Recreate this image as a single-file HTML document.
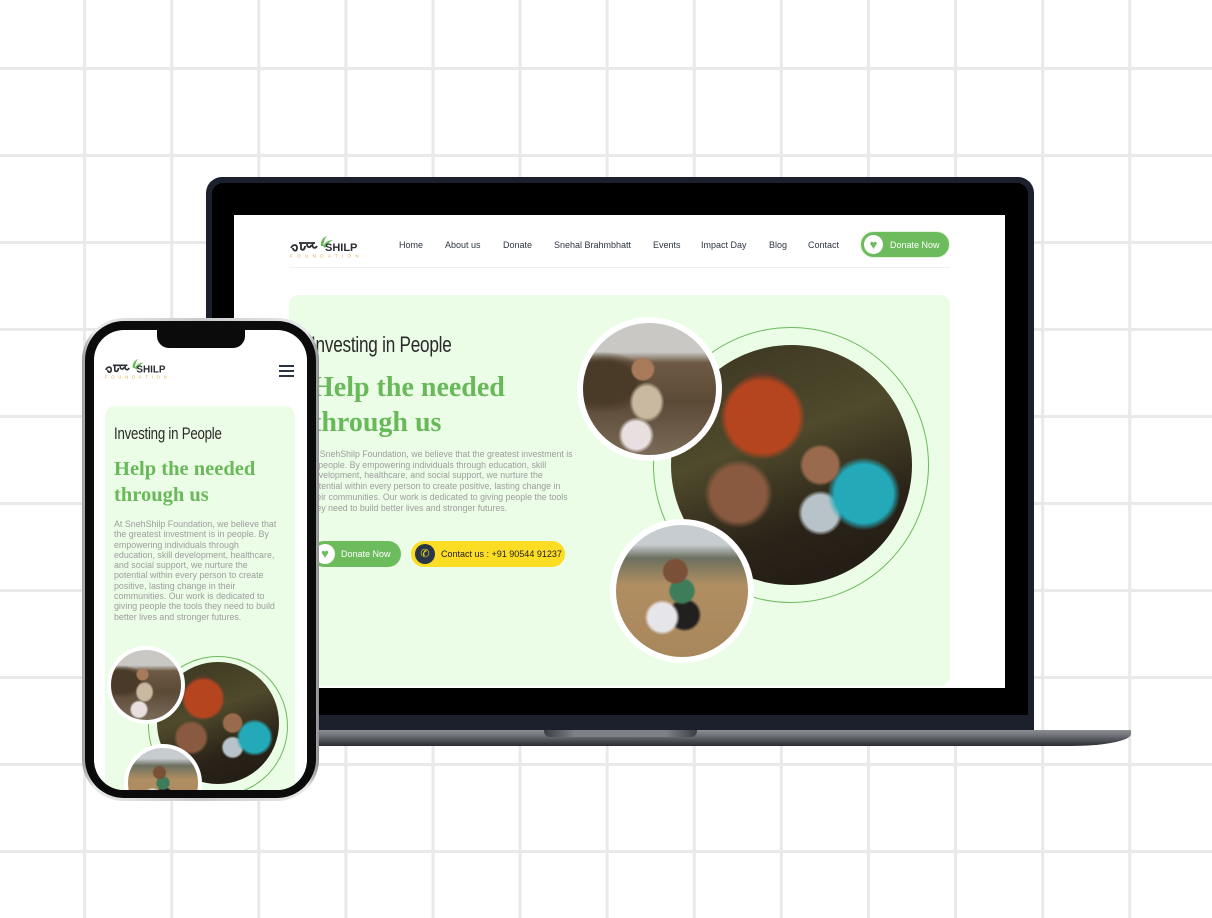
<!DOCTYPE html>
<html><head><meta charset="utf-8"><style>
*{margin:0;padding:0;box-sizing:border-box}
body{width:1212px;height:918px;overflow:hidden;position:relative;background:#fff;font-family:"Liberation Sans",sans-serif}
.grid{position:absolute;inset:0;background-image:linear-gradient(90deg,transparent 83px,#e9e9e9 83px,#e9e9e9 86px,transparent 86px),linear-gradient(180deg,transparent 67px,#e9e9e9 67px,#e9e9e9 70px,transparent 70px);background-size:87.1px 87px;background-position:0 0}
.abs{position:absolute}
.circ{position:absolute;border-radius:50%}
.cursive{font-family:"Liberation Sans Narrow","Liberation Sans",sans-serif;font-weight:normal;color:#2a2a2a;transform:scaleX(.78);transform-origin:left;letter-spacing:-.3px}
.serif{font-family:"Liberation Serif",serif;font-weight:bold;color:#69b95a}
.nav a{position:absolute;font-size:9px;color:#2d3540;text-decoration:none}
.photo1{background:radial-gradient(circle at 45% 35%,#a97a5a 0 9%,transparent 11%),radial-gradient(ellipse at 48% 60%,#c9b9a0 0 14%,transparent 18%),radial-gradient(circle at 40% 85%,#e8e0e0 0 10%,transparent 13%),radial-gradient(ellipse at 15% 45%,#4a3a28 0 20%,transparent 30%),linear-gradient(180deg,#c9c8c4 0 22%,#6e5a44 30%,#5b4a36 60%,#7a6a58 100%)}
.photo2{background:radial-gradient(circle at 38% 30%,#b5451f 0 16%,transparent 19%),radial-gradient(circle at 38% 22%,#5a3a2a 0 10%,transparent 12%),radial-gradient(circle at 62% 50%,#9a6a4c 0 9%,transparent 11%),radial-gradient(circle at 80% 62%,#23a9b8 0 12%,transparent 15%),radial-gradient(circle at 28% 62%,#8a5a40 0 12%,transparent 15%),radial-gradient(circle at 62% 70%,#b7c3c8 0 8%,transparent 10%),linear-gradient(160deg,#3a3520,#4f4a2c 40%,#2a2318 70%,#1f1a14)}
.photo3{background:radial-gradient(circle at 45% 35%,#7a5038 0 10%,transparent 12%),radial-gradient(circle at 50% 50%,#3e7d5a 0 12%,transparent 15%),radial-gradient(circle at 35% 70%,#e6e6ea 0 11%,transparent 14%),radial-gradient(circle at 52% 68%,#22201e 0 12%,transparent 15%),linear-gradient(180deg,#c7ccd0 0 15%,#6c7060 25%,#b08e62 45%,#a9875c 100%)}
</style></head><body>
<div class="grid"></div>

<!-- laptop -->
<div class="abs" style="left:206px;top:177px;width:828px;height:556px;background:#1b202c;border-radius:16px 16px 0 0"></div>
<div class="abs" style="left:212px;top:183px;width:816px;height:532px;background:#000;border-radius:11px 11px 0 0"></div>
<div class="abs" style="left:200px;top:730px;width:931px;height:16px;background:linear-gradient(180deg,#8b8e93 0,#6e7177 35%,#3d4046 80%,#2a2c30);border-radius:0 0 60px 4px/0 0 12px 4px"></div>
<div class="abs" style="left:544px;top:730px;width:153px;height:7px;background:linear-gradient(90deg,#3a3d42,#7d8086 20%,#7d8086 80%,#3a3d42);border-radius:0 0 6px 6px"></div>

<div class="abs" style="left:234px;top:215px;width:771px;height:473px;background:#fff;overflow:hidden">
  <div class="abs" style="left:55px;top:19px;width:80px;height:24px">
    <svg width="80" height="24" viewBox="0 0 80 24"><path d="M2 14c2-4 6-4 6 0s-4 3-4 0M10 9h16M12 9v6c2 2 4 0 4-3M18 10c0 4 4 4 4 1M24 9c-2 4 2 7 4 3" stroke="#2a2d33" stroke-width="1.8" fill="none"/><path d="M32 12c-1-6 3-9 6-10-3 3-3 7-4 10M34 12c3-5 7-6 10-6-4 2-6 5-8 8" fill="#69b95a"/><text x="36" y="17" font-family="Liberation Sans" font-weight="bold" font-size="11" fill="#2a2d33">SHILP</text><text x="1" y="23.5" font-family="Liberation Sans" font-size="4.6" letter-spacing="4.3" fill="#e0a84a">FOUNDATION</text></svg>
  </div>
  <div class="nav">
    <a style="left:165px;top:25px">Home</a>
    <a style="left:211px;top:25px">About us</a>
    <a style="left:269px;top:25px">Donate</a>
    <a style="left:320px;top:25px">Snehal Brahmbhatt</a>
    <a style="left:419px;top:25px">Events</a>
    <a style="left:467px;top:25px">Impact Day</a>
    <a style="left:535px;top:25px">Blog</a>
    <a style="left:574px;top:25px">Contact</a>
  </div>
  <div class="abs" style="left:626px;top:16px;width:90px;height:27px;border-radius:14px;background:#6cbb5c;border:1px solid #e6f5e0">
    <div class="circ" style="left:3px;top:3px;width:19px;height:19px;background:#fff;color:#6cbb5c;font-size:13px;line-height:19px;text-align:center">♥</div>
    <div class="abs" style="left:29px;top:8px;font-size:9px;color:#fff">Donate Now</div>
  </div>
  <div class="abs" style="left:55px;top:52px;width:661px;height:1px;background:#eef0f0"></div>
  <!-- card -->
  <div class="abs" style="left:55px;top:80px;width:661px;height:391px;background:#ebfde6;border-radius:10px">
    <div class="abs cursive" style="left:22px;top:37px;font-size:22px">Investing in People</div>
    <div class="abs serif" style="left:23px;top:75px;font-size:28px;line-height:35px">Help the needed<br>through us</div>
    <div class="abs" style="left:20px;top:154px;width:265px;font-size:8.8px;line-height:10.7px;color:#9d9d9d">At SnehShilp Foundation, we believe that the greatest investment is in people. By empowering individuals through education, skill development, healthcare, and social support, we nurture the potential within every person to create positive, lasting change in their communities. Our work is dedicated to giving people the tools they need to build better lives and stronger futures.</div>
    <div class="abs" style="left:22px;top:246px;width:90px;height:26px;border-radius:13px;background:#6cbb5c">
      <div class="circ" style="left:4px;top:3px;width:20px;height:20px;background:#fff;color:#6cbb5c;font-size:13px;line-height:20px;text-align:center">♥</div>
      <div class="abs" style="left:30px;top:8px;font-size:9px;color:#fff">Donate Now</div>
    </div>
    <div class="abs" style="left:122px;top:246px;width:154px;height:26px;border-radius:13px;background:#fddd24">
      <div class="circ" style="left:4px;top:3px;width:20px;height:20px;background:#283645;color:#fddd24;font-size:11px;line-height:20px;text-align:center">✆</div>
      <div class="abs" style="left:30px;top:8px;font-size:9px;color:#222">Contact us : +91 90544 91237</div>
    </div>
    <!-- circles -->
    <div class="circ" style="left:364px;top:32px;width:276px;height:276px;border:1px solid #6cbb5c"></div>
    <div class="circ photo2" style="left:382px;top:50px;width:241px;height:240px"></div>
    <div class="circ photo1" style="left:288px;top:22px;width:145px;height:144px;border:6px solid #fff"></div>
    <div class="circ photo3" style="left:321px;top:224px;width:144px;height:144px;border:6px solid #fff"></div>
  </div>
</div>

<!-- phone -->
<div class="abs" style="left:82px;top:318px;width:237px;height:483px;border-radius:42px;background:linear-gradient(90deg,#9a9ca0,#e8e9ea 5%,#c8c9cb 50%,#e8e9ea 95%,#8a8c90);"></div>
<div class="abs" style="left:85px;top:321px;width:231px;height:477px;border-radius:39px;background:#0b0b0b"></div>
<div class="abs" style="left:94px;top:330px;width:213px;height:460px;border-radius:30px;background:#fff;overflow:hidden">
  <div class="abs" style="left:63px;top:0;width:88px;height:18px;background:#0b0b0b;border-radius:0 0 12px 12px"></div>
  <div class="abs" style="left:10px;top:27px">
    <svg width="72" height="22" viewBox="0 0 80 24"><path d="M2 14c2-4 6-4 6 0s-4 3-4 0M10 9h16M12 9v6c2 2 4 0 4-3M18 10c0 4 4 4 4 1M24 9c-2 4 2 7 4 3" stroke="#2a2d33" stroke-width="1.8" fill="none"/><path d="M32 12c-1-6 3-9 6-10-3 3-3 7-4 10M34 12c3-5 7-6 10-6-4 2-6 5-8 8" fill="#69b95a"/><text x="36" y="17" font-family="Liberation Sans" font-weight="bold" font-size="11" fill="#2a2d33">SHILP</text><text x="1" y="23.5" font-family="Liberation Sans" font-size="4.6" letter-spacing="4.3" fill="#e0a84a">FOUNDATION</text></svg>
  </div>
  <div class="abs" style="left:185px;top:35px;width:15px;height:2px;background:#2a3440;box-shadow:0 5px 0 #2a3440,0 10px 0 #2a3440"></div>
  <div class="abs" style="left:11px;top:76px;width:190px;height:400px;background:#ebfde6;border-radius:10px;overflow:hidden">
    <div class="abs cursive" style="left:9px;top:18px;font-size:17px">Investing in People</div>
    <div class="abs serif" style="left:9px;top:50px;font-size:20.5px;line-height:26px">Help the needed<br>through us</div>
    <div class="abs" style="left:9px;top:113px;width:168px;font-size:8.9px;line-height:10.3px;color:#9d9d9d">At SnehShilp Foundation, we believe that the greatest investment is in people. By empowering individuals through education, skill development, healthcare, and social support, we nurture the potential within every person to create positive, lasting change in their communities. Our work is dedicated to giving people the tools they need to build better lives and stronger futures.</div>
    <div class="circ" style="left:43px;top:250px;width:140px;height:140px;border:1px solid #6cbb5c"></div>
    <div class="circ photo2" style="left:52px;top:256px;width:122px;height:122px"></div>
    <div class="circ photo1" style="left:2px;top:240px;width:78px;height:78px;border:4px solid #fff"></div>
    <div class="circ photo3" style="left:19px;top:338px;width:78px;height:78px;border:4px solid #fff"></div>
  </div>
</div>
</body></html>
